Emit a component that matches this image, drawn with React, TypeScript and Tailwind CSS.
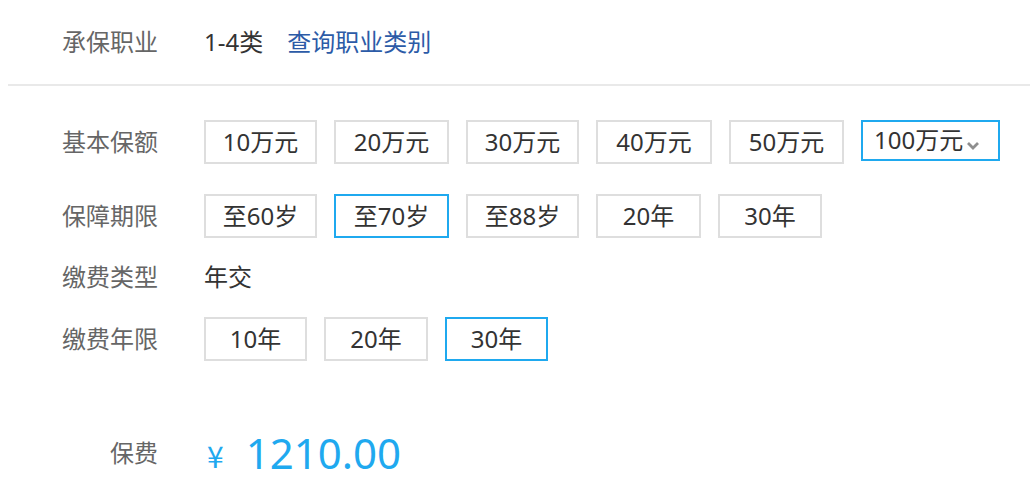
const font = { fontFamily: '"Noto Sans", "Noto Sans CJK SC", sans-serif' };

type Option = { label: string; width: string; selected?: boolean };

const amounts: Option[] = [
  { label: '10万元', width: 'w-[113px]' },
  { label: '20万元', width: 'w-[115px]' },
  { label: '30万元', width: 'w-[113px]' },
  { label: '40万元', width: 'w-[116px]' },
  { label: '50万元', width: 'w-[115px]' },
];

const periods: Option[] = [
  { label: '至60岁', width: 'w-[113px]' },
  { label: '至70岁', width: 'w-[115px]', selected: true },
  { label: '至88岁', width: 'w-[113px]' },
  { label: '20年', width: 'w-[105px]' },
  { label: '30年', width: 'w-[104px]' },
];

const payYears: Option[] = [
  { label: '10年', width: 'w-[103px]' },
  { label: '20年', width: 'w-[104px]' },
  { label: '30年', width: 'w-[103px]', selected: true },
];

function Label({ children }: { children: React.ReactNode }) {
  return <div className="w-[158px] shrink-0 text-right text-[#666]">{children}</div>;
}

function OptionBox({ option }: { option: Option }) {
  return (
    <div
      className={`${option.width} h-[44px] flex items-center justify-center border-2 text-[#333] ${
        option.selected ? 'border-[#1fa9ef]' : 'border-[#dedede]'
      }`}
    >
      {option.label}
    </div>
  );
}

function OptionRow({ label, options, extra }: { label: string; options: Option[]; extra?: React.ReactNode }) {
  return (
    <div className="flex items-center h-[44px]">
      <Label>{label}</Label>
      <div className="ml-[46px] flex gap-[17px]">
        {options.map((o) => (
          <OptionBox key={o.label} option={o} />
        ))}
        {extra}
      </div>
    </div>
  );
}

export default function App() {
  const moreAmount = (
    <div className="w-[139px] h-[41px] self-start flex items-center border-2 border-[#1fa9ef] pl-[11px] text-[#333]">
      <span className="leading-none -mt-[2px]">100万元</span>
      <svg width="14" height="9" viewBox="0 0 14 9" className="ml-[3px] mt-[10px]">
        <polyline points="2,2 7,7 12,2" fill="none" stroke="#8f8f8f" strokeWidth="2.8" />
      </svg>
    </div>
  );

  return (
    <div className="w-[1030px] h-[484px] bg-white text-[24px] overflow-hidden" style={font}>
      <div className="flex items-center h-[84px]">
        <Label>承保职业</Label>
        <span className="ml-[46px] text-[#333]">1-4类</span>
        <a className="ml-[24px] text-[#2c5ba7]">查询职业类别</a>
      </div>
      <div className="ml-[8px] h-[2px] bg-[#e9e9e9]" />

      <div className="mt-[34px]">
        <OptionRow label="基本保额" options={amounts} extra={moreAmount} />
      </div>
      <div className="mt-[30px]">
        <OptionRow label="保障期限" options={periods} />
      </div>
      <div className="mt-[17px] flex items-center h-[44px]">
        <Label>缴费类型</Label>
        <span className="ml-[46px] text-[#333]">年交</span>
      </div>
      <div className="mt-[18px]">
        <OptionRow label="缴费年限" options={payYears} />
      </div>

      <div className="mt-[62px] flex items-center h-[60px]">
        <Label>保费</Label>
        <span
          className="ml-[49px] text-[30px] text-[#1fa9ef] mt-[4px] leading-none"
          style={{ fontFamily: '"Noto Sans CJK SC", sans-serif' }}
        >
          ¥
        </span>
        <span className="ml-[22px] text-[42px] text-[#1fa9ef] leading-none">1210.00</span>
      </div>
    </div>
  );
}
